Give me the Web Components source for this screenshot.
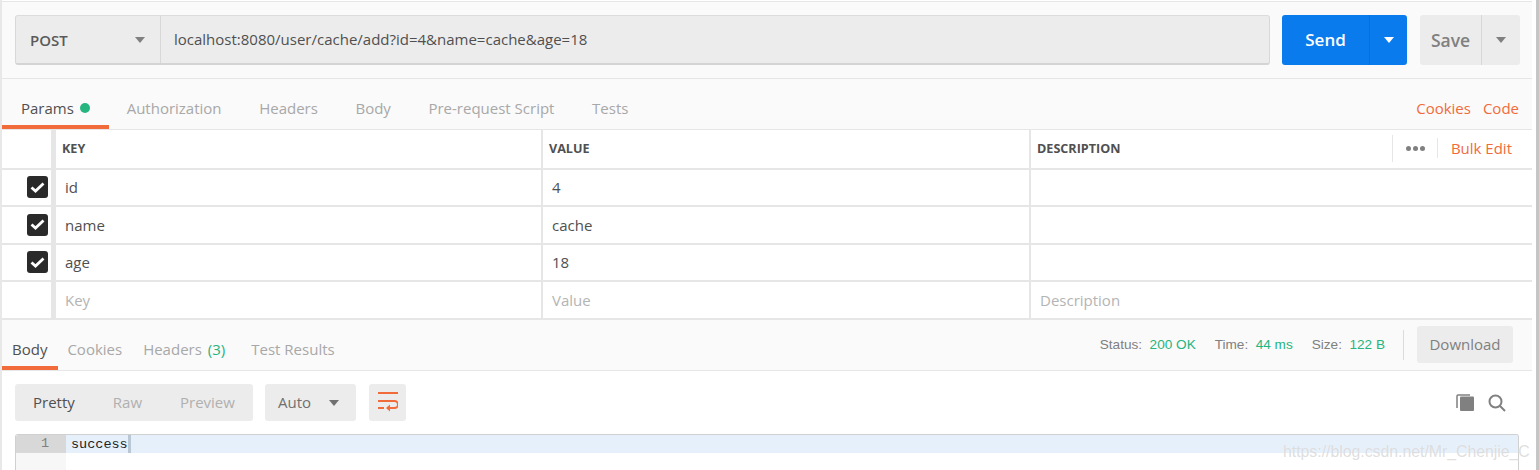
<!DOCTYPE html>
<html>
<head>
<meta charset="utf-8">
<title>Postman</title>
<style>
  html, body { margin: 0; padding: 0; background: #fff; }
  body { width: 1539px; height: 470px; overflow: hidden; font-family: "Open Sans", sans-serif; }
</style>
</head>
<body>
<pm-app>
  <pm-request-bar method="POST" url="localhost:8080/user/cache/add?id=4&amp;name=cache&amp;age=18"></pm-request-bar>
  <pm-tabs>
    <pm-tab active dot>Params</pm-tab>
    <pm-tab>Authorization</pm-tab>
    <pm-tab>Headers</pm-tab>
    <pm-tab>Body</pm-tab>
    <pm-tab>Pre-request Script</pm-tab>
    <pm-tab>Tests</pm-tab>
    <span slot="right" style="color:#f26b3a">Cookies</span>
    <span slot="right" style="color:#f26b3a">Code</span>
  </pm-tabs>
  <pm-params-table></pm-params-table>
  <pm-response-bar></pm-response-bar>
  <pm-response-tools></pm-response-tools>
  <pm-code-view></pm-code-view>
</pm-app>
<script>
const caret = (color) => `<svg width="10" height="6" viewBox="0 0 10 6"><path d="M0 0h10L5 6z" fill="${color}"/></svg>`;

class PmApp extends HTMLElement {
  constructor() {
    super();
    this.attachShadow({ mode: 'open' });
    this.shadowRoot.innerHTML = `
      <style>
        :host { display: block; position: relative; width: 1539px; height: 470px; box-sizing: border-box; padding: 1px 7px 0 2px; background: #fff; overflow: hidden; color: #505050; }
        :host::before { content: ''; position: absolute; left: 0; top: 0; bottom: 0; width: 2px; background: #e8e8e8; }
        :host::after { content: ''; position: absolute; right: 0; top: 0; bottom: 0; width: 3px; background: #c6c6c6; }
        .frame { border-top: 1px solid #e6e6e6; width: 1530px; height: 468px; display: flex; flex-direction: column; }
        .mark { position: absolute; left: 1283px; top: 443px; font: 15.800px "Liberation Sans", sans-serif; color: rgba(195,195,195,.55); text-shadow: 0 0 1px rgba(255,255,255,.8); white-space: nowrap; }
      </style>
      <div class="frame"><slot></slot></div>
      <div class="mark">https://blog.csdn.net/Mr_Chenjie_C</div>`;
  }
}

class PmRequestBar extends HTMLElement {
  constructor() {
    super();
    this.attachShadow({ mode: 'open' });
    this.shadowRoot.innerHTML = `
      <style>
        :host { display: flex; height: 77px; box-sizing: border-box; padding: 13px 12px 0 13px; background: #fafafa; border-bottom: 1px solid #e6e6e6; font-size: 15px; }
        .input { flex: 0 0 1255px; height: 50px; box-sizing: border-box; display: flex; background: #ececec; border-radius: 3px; border: 1px solid #d8d8d8; border-top-color: #dcdcdc; border-bottom: 2px solid #d4d4d4; }
        .method { width: 145px; box-sizing: border-box; padding: 0 15px 0 14px; display: flex; align-items: center; justify-content: space-between; border-right: 1px solid #d8d8d8; font-weight: 600; color: #5a5a5a; }
        .url { padding-left: 13px; line-height: 47px; color: #505050; white-space: nowrap; }
        .send { margin-left: 12px; width: 125px; height: 50px; display: flex; background: #097bed; border-radius: 3px; color: #fff; font-size: 17px; font-weight: 600; }
        .send .lbl { width: 87px; text-align: center; line-height: 50px; border-right: 1px solid #0a6fd4; }
        .send .arr { flex: 1; display: flex; align-items: center; justify-content: center; }
        .save { margin-left: 13px; width: 100px; height: 50px; display: flex; background: #ececec; border-radius: 3px; color: #808080; font-size: 17.5px; font-weight: 600; }
        .save .lbl { width: 61px; text-align: center; line-height: 50px; border-right: 1px solid #d8d8d8; }
        .save .arr { flex: 1; display: flex; align-items: center; justify-content: center; }
      </style>
      <div class="input">
        <div class="method"><span>${this.getAttribute('method')}</span>${caret('#808080')}</div>
        <div class="url"></div>
      </div>
      <div class="send"><div class="lbl">Send</div><div class="arr">${caret('#fff')}</div></div>
      <div class="save"><div class="lbl">Save</div><div class="arr">${caret('#808080')}</div></div>`;
    this.shadowRoot.querySelector('.url').textContent = this.getAttribute('url');
  }
}

class PmTab extends HTMLElement {
  constructor() {
    super();
    this.attachShadow({ mode: 'open' });
    this.shadowRoot.innerHTML = `
      <style>
        :host { display: flex; align-items: center; box-sizing: border-box; height: 100%; padding: 12px 18.800px 0; border-bottom: 4px solid transparent; color: #a8a8a8; white-space: nowrap; }
        :host([active]) { color: #505050; border-bottom-color: #f26b3a; padding: 12px 19px 0; margin-right: -1px; }
        .dot { display: none; width: 10px; height: 10px; border-radius: 50%; background: #26b47f; margin: 0 0 0 6px; }
        :host([dot]) .dot { display: inline-block; }
      </style>
      <slot></slot><span class="dot"></span>`;
  }
}

class PmTabs extends HTMLElement {
  constructor() {
    super();
    this.attachShadow({ mode: 'open' });
    this.shadowRoot.innerHTML = `
      <style>
        :host { display: flex; height: 51px; box-sizing: border-box; background: #fafafa; border-bottom: 1px solid #e6e6e6; font-size: 15px; }
        .left { display: flex; flex: 1; }
        .right { display: flex; gap: 12px; align-items: center; padding: 12px 13px 4px 0; }
      </style>
      <div class="left"><slot></slot></div>
      <div class="right"><slot name="right"></slot></div>`;
  }
}

class PmParamRow extends HTMLElement {
  constructor() {
    super();
    this.attachShadow({ mode: 'open' });
    const checked = this.hasAttribute('checked');
    const ghost = this.hasAttribute('ghost');
    this.shadowRoot.innerHTML = `
      <style>
        :host { display: grid; grid-template-columns: 54px 487px 488px 1fr; height: 37.500px; box-sizing: border-box; border-bottom: 2px solid #e6e6e6; font-size: 15px; color: ${ghost ? '#b4b4b4' : '#505050'}; background: #fff; }
        div { box-sizing: border-box; border-right: 2px solid #e6e6e6; display: flex; align-items: center; padding-left: 9px; }
        .chk { justify-content: center; padding: 0 0 0 21px; border-right-width: 5px; }
        .chk i { display: ${checked ? 'flex' : 'none'}; width: 21px; height: 22px; border-radius: 3px; background: #2a2a2a; align-items: center; justify-content: center; }
        div:last-child { border-right: 0; }
      </style>
      <div class="chk"><i><svg width="15" height="11" viewBox="0 0 15 11"><path d="M1.500 5.500l4 3.600 8-7.600" fill="none" stroke="#fff" stroke-width="2.800"/></svg></i></div>
      <div>${this.getAttribute('k')}</div><div>${this.getAttribute('v')}</div><div>${this.getAttribute('d') || ''}</div>`;
  }
}

class PmParamsTable extends HTMLElement {
  constructor() {
    super();
    this.attachShadow({ mode: 'open' });
    this.shadowRoot.innerHTML = `
      <style>
        :host { display: block; height: 190px; box-sizing: border-box; background: #fff; }
        .head { display: grid; grid-template-columns: 54px 487px 488px 1fr; height: 39.500px; box-sizing: border-box; border-bottom: 2px solid #e6e6e6; font-size: 12.600px; font-weight: 700; color: #505050; }
        .head > div { box-sizing: border-box; border-right: 2px solid #e6e6e6; display: flex; align-items: center; padding: 0 0 1px 6px; }
        .head > div:first-child { border-right-width: 5px; }
        .head > div:last-child { border-right: 0; justify-content: space-between; padding-right: 20px; }
        .tools { display: flex; align-items: center; height: 27px; font-size: 15px; font-weight: 400; color: #f26b3a; }
        .more { display: flex; gap: 2px; align-items: center; height: 100%; border-left: 1px solid #e6e6e6; padding: 0 12px 0 13px; margin-right: 0; }
        .more b { width: 5px; height: 5px; border-radius: 50%; background: #808080; }
        .bulk { border-left: 1px solid #e6e6e6; padding-left: 13px; line-height: 20px; }
      </style>
      <div class="head">
        <div></div><div>KEY</div><div>VALUE</div>
        <div><span>DESCRIPTION</span><span class="tools"><span class="more"><b></b><b></b><b></b></span><span class="bulk">Bulk Edit</span></span></div>
      </div>
      <pm-param-row checked k="id" v="4"></pm-param-row>
      <pm-param-row checked k="name" v="cache"></pm-param-row>
      <pm-param-row checked k="age" v="18"></pm-param-row>
      <pm-param-row ghost k="Key" v="Value" d="Description"></pm-param-row>`;
  }
}

class PmResponseBar extends HTMLElement {
  constructor() {
    super();
    this.attachShadow({ mode: 'open' });
    this.shadowRoot.innerHTML = `
      <style>
        :host { display: flex; height: 51px; box-sizing: border-box; background: #fafafa; border-bottom: 1px solid #e6e6e6; font-size: 15px; }
        .tabs { display: flex; flex: 1; }
        .tabs span { display: flex; align-items: center; box-sizing: border-box; padding: 12px 0 0; border-bottom: 4px solid transparent; color: #a8a8a8; white-space: nowrap; }
        .tabs .on { color: #505050; border-bottom-color: #f26b3a; padding: 12px 11px 0 10px; }
        .tabs .c { margin-left: 9px; }
        .tabs .h { margin-left: 21px; }
        .tabs .t { margin-left: 26px; }
        .tabs em { font-style: normal; color: #26b47f; margin-left: 6px; }
        .stat { display: flex; align-items: center; align-self: flex-start; height: 37px; margin-top: 6px; font: 13.600px "Liberation Sans", sans-serif; color: #808080; }
        .stat b { font-weight: 400; color: #26b47f; margin: 0 19px 0 7.500px; }
        .stat b.last { margin-right: 18px; }
        .sep { width: 1px; height: 30px; background: #dcdcdc; margin-right: 13px; }
        .dl { width: 96px; height: 37px; margin: 0 19px 0 0; background: #ececec; border-radius: 3px; text-align: center; color: #808080; font: 15px/37px "Open Sans", sans-serif; }
      </style>
      <div class="tabs"><span class="on">Body</span><span class="c">Cookies</span><span class="h">Headers<em>(3)</em></span><span class="t">Test Results</span></div>
      <div class="stat">Status:<b>200 OK</b>Time:<b>44 ms</b>Size:<b class="last">122 B</b><span class="sep"></span><span class="dl">Download</span></div>`;
  }
}

class PmResponseTools extends HTMLElement {
  constructor() {
    super();
    this.attachShadow({ mode: 'open' });
    this.shadowRoot.innerHTML = `
      <style>
        :host { display: flex; align-items: center; height: 63px; box-sizing: border-box; padding: 0 26px 0 13px; background: #fff; font-size: 15px; }
        .seg { display: flex; align-items: center; width: 238px; height: 37px; background: #ececec; border-radius: 3px; color: #b0b0b0; padding: 0 0 2px 18px; box-sizing: border-box; gap: 38px; }
        .seg .on { color: #505050; }
        .auto { margin-left: 12px; width: 91px; height: 37px; box-sizing: border-box; padding: 0 17px 0 13px; display: flex; align-items: center; justify-content: space-between; background: #ececec; border-radius: 3px; color: #707070; }
        .auto span { margin-bottom: 2px; }
        .wrap { margin-left: 13px; width: 37px; height: 37px; display: flex; align-items: center; justify-content: center; background: #ececec; border-radius: 3px; }
        .icons { margin-left: auto; display: flex; gap: 14px; align-items: center; }
      </style>
      <div class="seg"><span class="on">Pretty</span><span>Raw</span><span>Preview</span></div>
      <div class="auto"><span>Auto</span>${caret('#707070')}</div>
      <div class="wrap"><svg width="20" height="21" viewBox="0 0 20 21" fill="none" stroke="#f26b3a" stroke-width="2"><path d="M0 1h20M0 9h16.500a3.500 3.500 0 0 1 0 7H11M0 16h6"/><path d="M12 12.500L8 16l4 3.500z" fill="#f26b3a" stroke="none"/></svg></div>
      <div class="icons">
        <svg width="18" height="17" viewBox="0 0 18 17"><path d="M1 14V2a1 1 0 0 1 1-1h12" fill="none" stroke="#808080" stroke-width="1.500"/><rect x="4" y="2.500" width="14" height="14.500" rx="1" fill="#808080"/></svg>
        <svg width="18" height="18" viewBox="0 0 18 18" fill="none" stroke="#808080" stroke-width="2"><circle cx="7.500" cy="7.500" r="6"/><path d="M12 12l5 5"/></svg>
      </div>`;
  }
}

class PmCodeView extends HTMLElement {
  constructor() {
    super();
    this.attachShadow({ mode: 'open' });
    this.shadowRoot.innerHTML = `
      <style>
        :host { display: flex; margin: 0 13px 0 13px; height: 36px; box-sizing: border-box; border: 1px solid #d0d0d0; border-bottom: 0; border-radius: 3px 3px 0 0; background: #fff; font: 13.500px "Liberation Mono", monospace; overflow: hidden; }
        .gut { width: 50px; background: #f7f7f7; color: #808080; text-align: right; }
        .gut div { height: 18px; line-height: 18px; background: #d8d8d8; padding-right: 17px; }
        .line { flex: 1; height: 18px; line-height: 19px; background: #e6f0fb; padding-left: 5px; color: #222; }
        .line i { display: inline-block; width: 3px; height: 18px; background: #b9c6d4; vertical-align: top; }
      </style>
      <div class="gut"><div>1</div></div>
      <div class="line">success<i></i></div>`;
  }
}

customElements.define('pm-app', PmApp);
customElements.define('pm-request-bar', PmRequestBar);
customElements.define('pm-tab', PmTab);
customElements.define('pm-tabs', PmTabs);
customElements.define('pm-param-row', PmParamRow);
customElements.define('pm-params-table', PmParamsTable);
customElements.define('pm-response-bar', PmResponseBar);
customElements.define('pm-response-tools', PmResponseTools);
customElements.define('pm-code-view', PmCodeView);
</script>
</body>
</html>
